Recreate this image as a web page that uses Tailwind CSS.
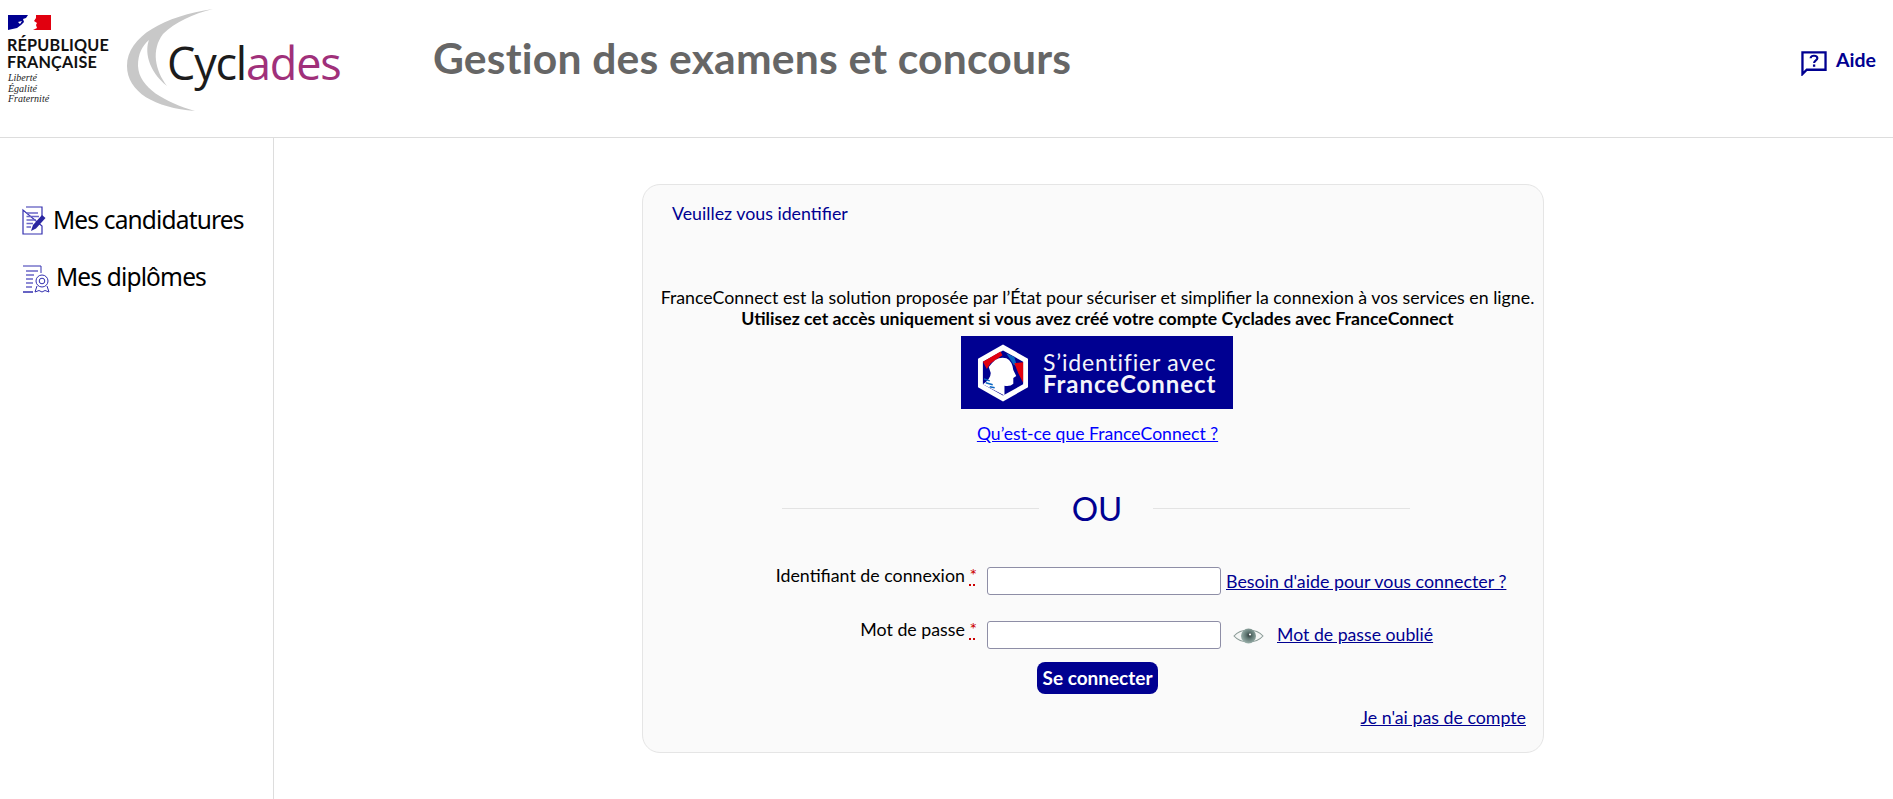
<!DOCTYPE html>
<html lang="fr">
  <head>
    <meta charset="UTF-8" />
    <title>Cyclades</title>
    <script src="https://cdn.jsdelivr.net/npm/@tailwindcss/browser@4"></script>
  </head>
  <body class="bg-white font-['Lato','Noto_Sans',sans-serif] text-black h-[799px] overflow-hidden">

    <!-- entete -->
    <header class="h-[138px] border-b border-[#dddddd] flex items-start">
      <div class="w-[125px] shrink-0 pl-[7px] pt-[15px]">
        <svg width="43" height="15" viewBox="0 0 43 15" class="block ml-[1px]">
          <path d="M0 0H20L18 3 15 4 16 7 13 10 9 13 0 15Z" fill="#000091"/>
          <path d="M10 7 14 6 12 9Z" fill="#fff"/>
          <path d="M28 0H43V15H25L29 13 28 10 29 8 26 6 28 3Z" fill="#e1000f"/>
        </svg>
        <div class="mt-[6px] text-[16.2px] leading-[17px] font-bold text-[#111] tracking-[0.2px]">RÉPUBLIQUE<br>FRANÇAISE</div>
        <div class="mt-[3px] ml-[1px] font-['Liberation_Serif',serif] italic text-[10px] leading-[10.5px] text-[#222]">Liberté<br>Égalité<br>Fraternité</div>
      </div>
      <div class="w-[220px] h-[110px] mt-[8px] shrink-0 relative">
        <svg width="100" height="104" viewBox="0 0 100 104" class="absolute left-0 top-0">
          <path d="M88 1C40 8 2 28 2 58 2 84 30 100 70 103 40 94 14 80 13 58 13 46 17 38 24 32 20 42 22 62 42 78 30 62 26 42 38 26 50 14 68 6 88 1Z" fill="#c8c8c8"/>
        </svg>
        <div class="absolute left-[42px] top-[25px] font-['Open_Sans',sans-serif] text-[45px] leading-[60px] tracking-[-1.2px] text-[#1c1c1c]">Cycl<span class="text-[#a0307a]">ades</span></div>
      </div>
      <h1 class="ml-[88px] mt-[32px] text-[42.6px] leading-[52px] font-bold text-[#666666] tracking-[0.2px]">Gestion des examens et concours</h1>
      <a class="ml-auto mr-[17px] mt-[47px] flex items-start gap-[9px] text-[#000091] font-bold text-[19.5px] leading-[26px]" href="#">
        <svg width="26" height="25" viewBox="0 0 27 26" class="mt-[4px]" fill="none">
          <path d="M1.5 1.5H25.5V19.5H6L1.5 24Z" stroke="#000091" stroke-width="2.4"/>
          <path d="M10 7.5C10 5.8 11.5 5 13.5 5 15.5 5 17 6 17 7.6 17 9.8 13.6 9.8 13.6 12.5" stroke="#000091" stroke-width="2.2"/>
          <rect x="12.4" y="14" width="2.4" height="2.4" fill="#000091"/>
        </svg>
        Aide
      </a>
    </header>

    <div class="flex h-[661px]">
      <!-- menu -->
      <nav class="w-[274px] shrink-0 border-r border-[#dddddd] pl-[22px] pt-[67px] font-['Noto_Sans',sans-serif] text-[24.5px] tracking-[-0.85px]">
        <a class="flex items-center gap-[7px] h-[30px]" href="#">
          <svg width="24" height="29" viewBox="0 0 24 29" fill="none" stroke="#3430b0" stroke-width="1.2">
            <path d="M4 1H20V12M20 20V28H1V4Z"/>
            <path d="M4.5 7H16M4.5 10.5H17M4.5 14H14M4.5 17.500H11M4.5 21H9" stroke-width="1.3" stroke="#6a66c8"/>
            <path d="M9 25 11 19 20 9 23.500 12 14 22.500Z" fill="#2a26a0" stroke="none"/>
          </svg>
          Mes candidatures
        </a>
        <a class="flex items-center gap-[6px] h-[30px] mt-[27px]" href="#">
          <svg width="28" height="28" viewBox="0 0 28 28" fill="none" stroke="#3430b0" stroke-width="1" class="mt-[4px]">
            <path d="M1 1H19V8M11 27H1Z"/>
            <path d="M4 6H16M4 10H12M4 14H11M4 18H11M4 22H10" stroke-width="1.3" stroke="#6a66c8"/>
            <circle cx="20" cy="16" r="6"/>
            <circle cx="20" cy="16" r="2.800"/>
            <path d="M15 21 13 27 17 25.500 20 27 23 25.500 27 27 25 21"/>
          </svg>
          Mes diplômes
        </a>
      </nav>

      <!-- connexion -->
      <main class="flex-1 pl-[368px] pt-[46px]">
        <section class="w-[902px] h-[569px] rounded-[18px] border border-[#e5e5e5] bg-[#fafafa]">
          <p class="pl-[29px] pt-[16px] text-[#000091] text-[17.8px] leading-[24px]">Veuillez vous identifier</p>

          <div class="mt-[62px] pl-[9px] text-center text-[17.75px] leading-[21px]">
            <p>FranceConnect est la solution proposée par l’État pour sécuriser et simplifier la connexion à vos services en ligne.</p>
            <p class="font-bold text-[17.65px]">Utilisez cet accès uniquement si vous avez créé votre compte Cyclades avec FranceConnect</p>
          </div>

          <div class="mt-[7px] w-[272px] h-[73px] ml-[318px] bg-[#000091] flex items-center pl-[16px] gap-[14px]">
            <svg width="52" height="60" viewBox="0 0 53 60" class="shrink-0">
              <path d="M26.5 1 52 15.500V44.500L26.5 59 1 44.500V15.500Z" fill="#fff"/>
              <path d="M26.5 7 47 18.500V41.500L26.5 53 6 41.500V18.500Z" fill="#000091"/>
              <path d="M6 18.500 24 8 26 12 14 20 10 26Z" fill="#e1000f"/>
              <path d="M30 10 38 13.500 41 24 37 21Z" fill="#0a66c2"/>
              <path d="M47 19 47 40 42 30 38 20Z" fill="#e1000f"/>
              <path d="M12 24Q20 12 30 15 36 18 37 27L40 33 37 35 37 41Q34 44 28 43L28 53 6 41.500Q14 36 14 30Z" fill="#fff"/>
              <path d="M7 36 13 38M9 40 16 42M13 44 18 45" stroke="#0a66c2" stroke-width="1.500"/>
            </svg>
            <div class="text-[#f4f4fa] text-[23px] leading-[22px]"><span class="tracking-[0.8px]">S’identifier avec</span><br><span class="font-bold text-[24px] tracking-[0.95px]">FranceConnect</span></div>
          </div>

          <p class="mt-[14px] pl-[9px] text-center text-[17.6px] leading-[22px]"><a class="text-[#0000ff] underline" href="#">Qu’est-ce que FranceConnect ?</a></p>

          <!-- separateur OU -->
          <div class="mt-[43px] ml-[139px] w-[628px] flex items-center">
            <div class="flex-1 h-px bg-[#e3e3e3]"></div>
            <span class="w-[114px] pl-[2px] text-center text-[#000091] text-[33px] leading-[40px]">OU</span>
            <div class="w-[257px] h-px bg-[#e3e3e3]"></div>
          </div>

          <div class="mt-[39px] flex items-start h-[28px]">
            <label class="w-[334px] text-right text-[17.8px] leading-[16px]">Identifiant de connexion <abbr class="text-[#cc0000] underline decoration-dotted underline-offset-[3px]" title="obligatoire">*</abbr></label>
            <input class="ml-[10px] w-[234px] h-[28px] bg-white border border-[#8e8ea6] rounded-[3px]" type="text" />
            <a class="ml-[5px] mt-[3px] text-[#000091] underline text-[17.85px] leading-[22px]" href="#">Besoin d'aide pour vous connecter ?</a>
          </div>

          <div class="mt-[26px] flex items-start h-[28px]">
            <label class="w-[334px] text-right text-[17.8px] leading-[16px]">Mot de passe <abbr class="text-[#cc0000] underline decoration-dotted underline-offset-[3px]" title="obligatoire">*</abbr></label>
            <input class="ml-[10px] w-[234px] h-[28px] bg-white border border-[#8e8ea6] rounded-[3px]" type="password" />
            <svg width="31" height="18" viewBox="0 0 31 18" class="ml-[12px] mt-[6px]">
              <defs>
                <radialGradient id="iris" cx="0.55" cy="0.45" r="0.6">
                  <stop offset="0" stop-color="#2f3a3a"/>
                  <stop offset="0.35" stop-color="#5d7470"/>
                  <stop offset="1" stop-color="#a3b9b3"/>
                </radialGradient>
              </defs>
              <path d="M1 9C8 1 23 1 30 9 23 17 8 17 1 9Z" fill="#f4f6f5" stroke="#8a9a96" stroke-width="1.100"/>
              <circle cx="15.5" cy="9" r="7.500" fill="url(#iris)"/>
              <circle cx="17" cy="7.500" r="1.100" fill="#fff"/>
            </svg>
            <a class="ml-[13px] mt-[3px] text-[#000091] underline text-[17.7px] leading-[22px]" href="#">Mot de passe oublié</a>
          </div>

          <button class="block mt-[13px] ml-[394px] w-[121px] h-[32px] rounded-[8px] bg-[#000091] text-white font-bold text-[19px] leading-[32px]">Se connecter</button>

          <p class="mt-[12px] pr-[17px] text-right text-[17.8px] leading-[22px]"><a class="text-[#000091] underline" href="#">Je n'ai pas de compte</a></p>
        </section>
      </main>
    </div>
  </body>
</html>
